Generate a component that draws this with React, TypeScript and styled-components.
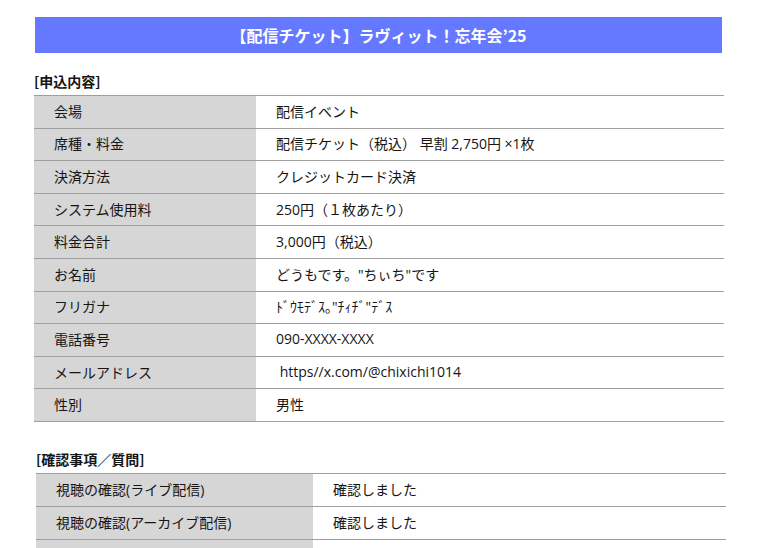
import React from "react";
import styled, { createGlobalStyle } from "styled-components";

const GlobalStyle = createGlobalStyle`
  html, body {
    margin: 0;
    padding: 0;
    background: #ffffff;
  }
  body {
    font-family: "Open Sans", "Noto Sans CJK JP", sans-serif;
    color: #151515;
    font-size: 14px;
  }
`;

const Page = styled.div`
  padding-top: 17px;
  display: flex;
  flex-direction: column;
  align-items: flex-start;
`;

const Header = styled.div`
  margin-left: 35px;
  width: 687px;
  height: 36px;
  background: #6479ff;
  color: #ffffff;
  font-family: "Noto Sans CJK JP", sans-serif;
  font-weight: 700;
  font-size: 16px;
  display: flex;
  align-items: center;
  justify-content: center;
`;

const Section = styled.section<{ $left: number; $top: number }>`
  margin-left: ${(p) => p.$left}px;
  margin-top: ${(p) => p.$top}px;
  width: 690px;
`;

const SectionTitle = styled.div`
  height: 20px;
  line-height: 20px;
  font-family: "Noto Sans CJK JP", sans-serif;
  font-weight: 700;
  font-size: 14px;
  margin-bottom: 4px;
`;

const Table = styled.div`
  display: flex;
  flex-direction: column;
  border-bottom: 1px solid #9e9e9e;
`;

const Row = styled.div<{ $labelWidth: number; $height: number }>`
  display: grid;
  grid-template-columns: ${(p) => p.$labelWidth}px 1fr;
  height: ${(p) => p.$height}px;
  border-top: 1px solid #9e9e9e;
`;

const Label = styled.div`
  background: #d6d6d6;
  padding-left: 20px;
  padding-bottom: 2px;
  display: flex;
  align-items: center;
  white-space: nowrap;
`;

const Value = styled.div`
  padding-left: 20px;
  padding-bottom: 2px;
  display: flex;
  align-items: center;
  white-space: pre;
`;

const applyRows: [string, string][] = [
  ["会場", "配信イベント"],
  ["席種・料金", "配信チケット（税込） 早割 2,750円 ×1枚"],
  ["決済方法", "クレジットカード決済"],
  ["システム使用料", "250円（１枚あたり）"],
  ["料金合計", "3,000円（税込）"],
  ["お名前", "どうもです。\"ちぃち\"です"],
  ["フリガナ", "ﾄﾞｳﾓﾃﾞｽ｡\"ﾁｨﾁﾞ\"ﾃﾞｽ"],
  ["電話番号", "090-XXXX-XXXX"],
  ["メールアドレス", "\u00a0https//x.com/@chixichi1014"],
  ["性別", "男性"],
];

const confirmRows: [string, string][] = [
  ["視聴の確認(ライブ配信)", "確認しました"],
  ["視聴の確認(アーカイブ配信)", "確認しました"],
  ["", ""],
];

export default function App() {
  return (
    <>
      <GlobalStyle />
      <Page>
        <Header>【配信チケット】ラヴィット！忘年会’25</Header>
        <Section $left={34} $top={18}>
          <SectionTitle>[申込内容]</SectionTitle>
          <Table>
            {applyRows.map(([k, v]) => (
              <Row key={k} $labelWidth={222} $height={31.6}>
                <Label>{k}</Label>
                <Value>{v}</Value>
              </Row>
            ))}
          </Table>
        </Section>
        <Section $left={36} $top={27}>
          <SectionTitle>[確認事項／質問]</SectionTitle>
          <Table>
            {confirmRows.map(([k, v], i) => (
              <Row key={i} $labelWidth={277} $height={32}>
                <Label>{k}</Label>
                <Value>{v}</Value>
              </Row>
            ))}
          </Table>
        </Section>
      </Page>
    </>
  );
}
